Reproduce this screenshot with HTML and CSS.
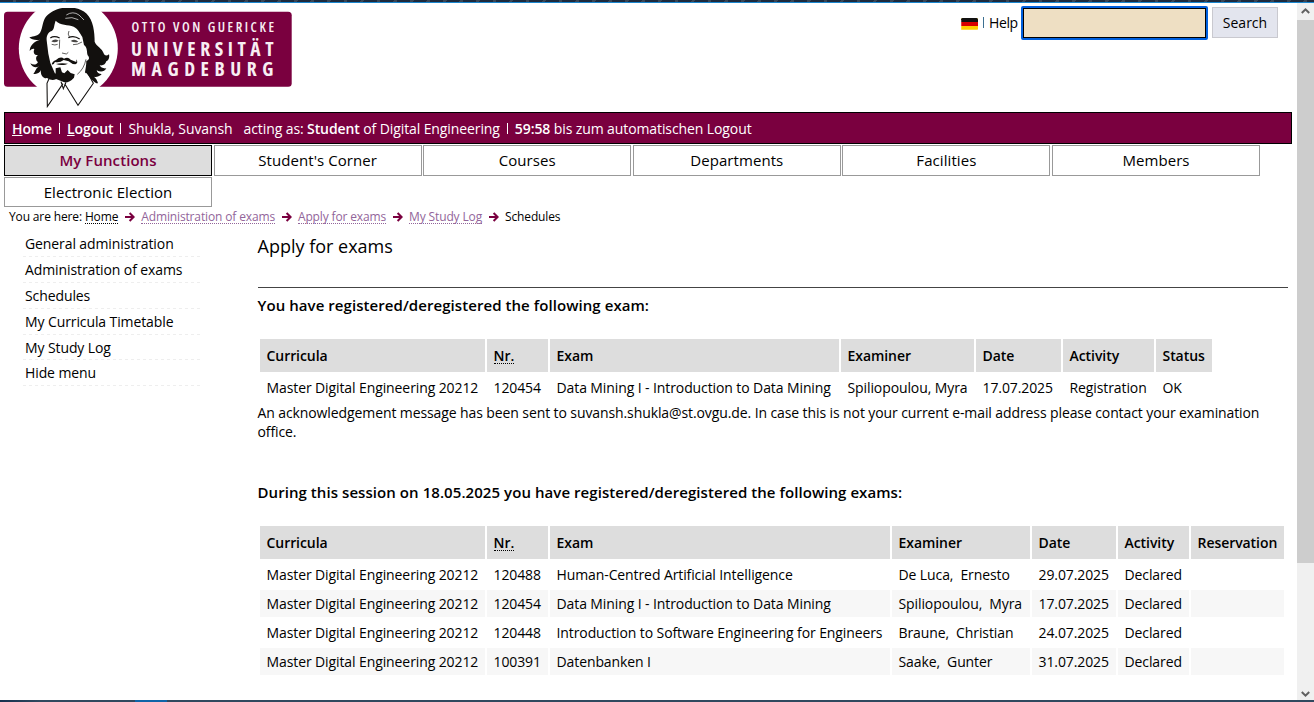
FILE: index.html
```html
<!DOCTYPE html>
<html lang="en">
<head>
<meta charset="utf-8">
<title>Apply for exams</title>
<link rel="stylesheet" href="styles.css">
</head>
<body>
<div class="strip-top"></div>
<div class="window">
<div class="page">
  <header class="header">
    <svg class="logo" width="288" height="101" viewBox="4 8 288 101">
      <rect x="4" y="11.7" width="287.7" height="75" rx="3.5" fill="#7a003f"/>
      <circle cx="68.3" cy="48.5" r="49.5" fill="#fff"/>
      <path d="M48 79 L90 79 L98 109 L40 109Z" fill="#fff"/>
      <g transform="translate(15 5) scale(.3333)">
        <path d="M154 8 C128 8 105 22 94 34 C82 48 84 66 76 82 C70 93 56 94 43 97 C50 104 60 106 76 104 C55 110 45 122 44 138 C49 132 54 130 58 132 C53 144 59 151 69 150 C60 156 63 168 69 171 C64 180 56 181 46 175 C51 186 62 190 72 184 C60 192 61 202 55 206 C66 209 75 202 78 195 C75 211 87 222 96 219 C110 228 122 226 130 216 L160 234 L192 214 L214 204 C228 222 239 236 249 235 C247 226 244 222 237 215 C249 218 257 211 260 207 C252 207 246 203 245 196 C258 203 268 200 274 190 C264 191 257 188 254 181 C265 183 272 177 274 169 C282 167 284 154 282 148 C275 154 268 152 266 145 C262 130 243 123 239 110 C239 82 235 45 215 26 C198 11 176 6 154 8Z" fill="#12100e"/>
        <path d="M122 47 C135 62 160 58 176 65 C190 72 194 84 202 96 L207 120 C218 128 215 141 218 151 C226 160 221 166 214 168 C214 180 212 190 210 202 L222 220 L192 238 L160 238 L146 232 L127 222 L115 194 L106 174 L100 146 L95 106 C94 92 99 82 110 78 C119 72 117 58 122 47Z" fill="#fff"/>
        <path d="M106 99 Q117 91 134 99 M160 98 Q177 90 194 102" fill="none" stroke="#12100e" stroke-width="3.6"/>
        <path d="M109 109 Q119 99 131 107 Q119 115 109 109Z M167 108 Q179 100 190 110 Q178 114 167 108Z" fill="#4a4846"/>
        <path d="M134 104 L133 131 M141 144 L154 147 L160 142 M162 78 Q157 88 163 95 M213 163 Q207 192 187 208 M201 111 Q187 120 174 119 M110 118 Q120 122 128 118" fill="none" stroke="#12100e" stroke-width="2"/>
        <path d="M110 178 Q112 169 123 165 Q137 153 147 161 Q159 154 167 164 L184 171 L184 163 Q191 175 181 178 Q171 178 161 169 L146 165 Q134 174 120 171 Q115 181 110 178Z M123 177 Q137 173 159 176 L151 179 Q136 182 123 177Z M122 190 L136 187 L141 202 L148 205 L158 195 L167 204 L179 208 L177 218 Q164 233 148 232 L123 222 L114 211 L122 205Z" fill="#12100e"/>
        <path d="M154 30 Q174 17 192 30 Q200 38 207 45 M151 40 Q171 34 190 44" fill="none" stroke="#fff" stroke-width="2"/>
        <path d="M103 219 L96 235 L97 305 L144 236 M149 236 L189 301 L235 235 L218 203 M138 230 L145 251 L153 232" fill="none" stroke="#12100e" stroke-width="3.2"/>
      </g>
      <g class="logo-text" fill="#f8eef3">
        <text x="131.5" y="31.8" font-size="13.6" textLength="142.5" lengthAdjust="spacing">OTTO VON GUERICKE</text>
        <text class="logo-bold" x="131" y="56" font-size="19.5" textLength="142.5" lengthAdjust="spacing">UNIVERSITÄT</text>
        <text class="logo-bold" x="131" y="76" font-size="19.5" textLength="142.5" lengthAdjust="spacing">MAGDEBURG</text>
      </g>
    </svg>
    <div class="tools">
      <svg class="flag" width="17" height="12" viewBox="0 0 17 12"><rect width="17" height="12" rx="1.5" fill="#ffce00"/><path d="M0 4H17V8H0Z" fill="#d80000"/><path d="M0 4V1.5Q0 0 1.5 0H15.5Q17 0 17 1.5V4Z" fill="#111"/><path d="M.5 2V10.5L1.5 11.5H16" fill="none" stroke="#fff" stroke-opacity=".25"/></svg>
      <span class="divider"></span>
      <span class="help">Help</span>
      <input class="query" type="text" aria-label="Search term">
      <button class="search">Search</button>
    </div>
  </header>
  <div class="status">
    <b><u>H</u>ome</b><i class="bar"></i><b><u>L</u>ogout</b><i class="bar"></i><span class="user">Shukla, Suvansh</span><span class="role">acting as: <b>Student</b> of Digital Engineering</span><i class="bar"></i><span><b>59:58</b> bis zum automatischen Logout</span>
  </div>
  <nav class="tabs">
    <a class="tab active">My Functions</a><a class="tab">Student's Corner</a><a class="tab">Courses</a><a class="tab">Departments</a><a class="tab">Facilities</a><a class="tab">Members</a><a class="tab">Electronic Election</a>
  </nav>
  <div class="crumbs">
    <span>You are here:</span><a class="crumb home">Home</a>
    <svg class="arrow" viewBox="0 0 10 10"><path d="M0 5H8M4.6 1L8.6 5L4.6 9"/></svg><a class="crumb">Administration of exams</a>
    <svg class="arrow" viewBox="0 0 10 10"><path d="M0 5H8M4.6 1L8.6 5L4.6 9"/></svg><a class="crumb">Apply for exams</a>
    <svg class="arrow" viewBox="0 0 10 10"><path d="M0 5H8M4.6 1L8.6 5L4.6 9"/></svg><a class="crumb">My Study Log</a>
    <svg class="arrow" viewBox="0 0 10 10"><path d="M0 5H8M4.6 1L8.6 5L4.6 9"/></svg><span>Schedules</span>
  </div>
  <div class="body">
    <ul class="menu">
      <li>General administration</li><li>Administration of exams</li><li>Schedules</li><li>My Curricula Timetable</li><li>My Study Log</li><li>Hide menu</li>
    </ul>
    <main class="content">
      <h1>Apply for exams</h1>
      <h2>You have registered/deregistered the following exam:</h2>
      <table class="first">
        <colgroup><col class="w225"><col class="w61"><col class="w289"><col class="w133"><col class="w85"><col class="w91"><col class="w56"></colgroup>
        <tr><th>Curricula</th><th><abbr>Nr.</abbr></th><th>Exam</th><th>Examiner</th><th>Date</th><th>Activity</th><th>Status</th></tr>
        <tr><td>Master Digital Engineering 20212</td><td>120454</td><td>Data Mining I - Introduction to Data Mining</td><td>Spiliopoulou, Myra</td><td>17.07.2025</td><td>Registration</td><td>OK</td></tr>
      </table>
      <p>An acknowledgement message has been sent to suvansh.shukla@st.ovgu.de. In case this is not your current e-mail address please contact your examination<br>office.</p>
      <h2 class="session">During this session on 18.05.2025 you have registered/deregistered the following exams:</h2>
      <table class="second">
        <colgroup><col class="w225"><col class="w61"><col class="w340"><col class="w138"><col class="w84"><col class="w71"><col class="w93"></colgroup>
        <tr><th>Curricula</th><th><abbr>Nr.</abbr></th><th>Exam</th><th>Examiner</th><th>Date</th><th>Activity</th><th>Reservation</th></tr>
        <tr><td>Master Digital Engineering 20212</td><td>120488</td><td>Human-Centred Artificial Intelligence</td><td>De Luca,&nbsp; Ernesto</td><td>29.07.2025</td><td>Declared</td><td></td></tr>
        <tr class="alt"><td>Master Digital Engineering 20212</td><td>120454</td><td>Data Mining I - Introduction to Data Mining</td><td>Spiliopoulou,&nbsp; Myra</td><td>17.07.2025</td><td>Declared</td><td></td></tr>
        <tr><td>Master Digital Engineering 20212</td><td>120448</td><td>Introduction to Software Engineering for Engineers</td><td>Braune,&nbsp; Christian</td><td>24.07.2025</td><td>Declared</td><td></td></tr>
        <tr class="alt"><td>Master Digital Engineering 20212</td><td>100391</td><td>Datenbanken I</td><td>Saake,&nbsp; Gunter</td><td>31.07.2025</td><td>Declared</td><td></td></tr>
      </table>
    </main>
  </div>
</div>
<div class="scroll">
  <svg width="17" height="17" viewBox="0 0 17 17"><path d="M4.8 10L8.5 6.3L12.2 10"/></svg>
  <div class="thumb"></div>
  <svg class="down" width="17" height="17" viewBox="0 0 17 17"><path d="M4.8 9L8.5 12.7L12.2 9"/></svg>
</div>
</div>
<div class="strip-bottom"></div>
</body>
</html>
```
FILE: styles.css
```css
* { box-sizing: border-box; }
body { margin: 0; width: 1314px; height: 702px; overflow: hidden; display: flex; flex-direction: column; background: #fff; color: #000; font: 14px/19px "Open Sans", "Noto Sans", sans-serif; }
.strip-top { height: 3px; flex: none; background: repeating-linear-gradient(115deg, #1d2a3d 0 12px, #3a4656 12px 15px); border-bottom: 1px solid #1b87cf; }
.strip-bottom { height: 2px; flex: none; background: linear-gradient(90deg, transparent 135px, #0f64a8 135px 167px, transparent 167px), linear-gradient(90deg, #16314f, #30495f 40px); }
.window { display: flex; height: 697px; }
.page { width: 1297px; padding-left: 4px; }
.header { display: flex; justify-content: space-between; height: 109px; padding: 5px 19px 0 0; }
.logo { display: block; }
.logo-text { font-family: "Open Sans", sans-serif; font-weight: 600; font-stretch: 75%; }
.logo-bold { font-weight: 700; }
.tools { display: flex; align-items: flex-start; }
.flag { margin: 10px 5px 0 0; }
.divider { width: 1px; height: 11px; margin: 9px 5px 0 0; background: #3c6f91; }
.help { width: 32px; padding-top: 5px; letter-spacing: -.4px; }
.query { width: 187px; height: 34px; margin-top: -2px; padding: 0; outline: 0; border: 2px solid #0060df; border-radius: 2px; background: #eedfc3; box-shadow: inset 0 0 0 1px #000; }
.search { width: 66px; height: 31px; margin: -1px 0 0 4px; border: 1px solid #c9c9cf; background: #e3e5ee; color: #000; font: 14px/19px "Open Sans", sans-serif; padding: 0 0 1px; }
.status { display: flex; align-items: center; width: 1288px; height: 32px; padding: 1px 7px 0; border: 1px solid #000; background: #7a003f; color: #fff; white-space: pre; letter-spacing: -.1px; }
b { font-weight: 600; }
.bar { width: 1px; height: 11px; margin: 0 7px; background: #fff; }
.user { margin-right: 11px; }
.tabs { display: grid; grid-template-columns: repeat(6, 208px); grid-template-rows: 31px 30px; gap: 1px 1.6px; margin-top: 1px; font-size: 15px; }
.tab { border: 1px solid #999; text-align: center; line-height: 29px; letter-spacing: .07px; }
.tab.active { border-color: #000; background: #ddd; color: #7a003f; font-weight: 600; }
.crumbs { display: flex; align-items: center; height: 20px; padding-left: 5px; font-size: 12px; line-height: 14px; white-space: pre; letter-spacing: -.14px; }
.crumb { border-bottom: 1px dotted #92659a; color: #92659a; line-height: 13px; }
.home { margin-left: 3px; color: #000; border-color: #000; }
.arrow { width: 10px; height: 10px; margin: 0 6px 0 7px; fill: none; stroke: #7a003f; stroke-width: 2; }
.body { display: flex; }
.menu { width: 253.5px; margin: 0; padding: 4px 0 0 19px; list-style: none; letter-spacing: -.1px; }
.menu li { width: 177px; height: 25.9px; padding: 3px 0 0 2px; background: repeating-linear-gradient(90deg, #eee 0 3px, transparent 3px 6px) 0 100% / 100% 1px no-repeat; white-space: nowrap; }
.content { width: 1030px; }
h1 { height: 61px; margin: 0 0 7px; padding-top: 7px; border-bottom: 1px solid #444; font-size: 18px; line-height: 25px; font-weight: 400; }
h2 { margin: 0; font-size: 15px; line-height: 20px; font-weight: 600; height: 42px; white-space: nowrap; letter-spacing: .065px; }
table { table-layout: fixed; border-spacing: 2px; border-collapse: separate; }
.first { width: 956px; }
.second { width: 1028px; }
th, td { padding: 0 0 0 7px; text-align: left; white-space: nowrap; }
th { height: 33px; background: #ddd; font-weight: 600; letter-spacing: -.06px; }
td { height: 27px; letter-spacing: -.1px; }
.alt td { background: #f7f7f7; }
abbr { border-bottom: 1px dotted #000; display: inline-block; line-height: 15px; }
p { margin: 0 0 41px; white-space: nowrap; letter-spacing: -.1px; }
.w225 { width: 225px; } .w61 { width: 61px; } .w289 { width: 289px; } .w133 { width: 133px; } .w85 { width: 85px; } .w91 { width: 91px; } .w56 { width: 56px; }
.w340 { width: 340px; } .w138 { width: 138px; } .w84 { width: 84px; } .w71 { width: 71px; } .w93 { width: 93px; }
.scroll { display: flex; flex-direction: column; width: 17px; background: #f0f0f0; }
.scroll svg { fill: none; stroke: #606060; stroke-width: 2; flex: none; }
.thumb { height: 543px; background: #cdcdcd; }
.down { margin-top: auto; }
```
